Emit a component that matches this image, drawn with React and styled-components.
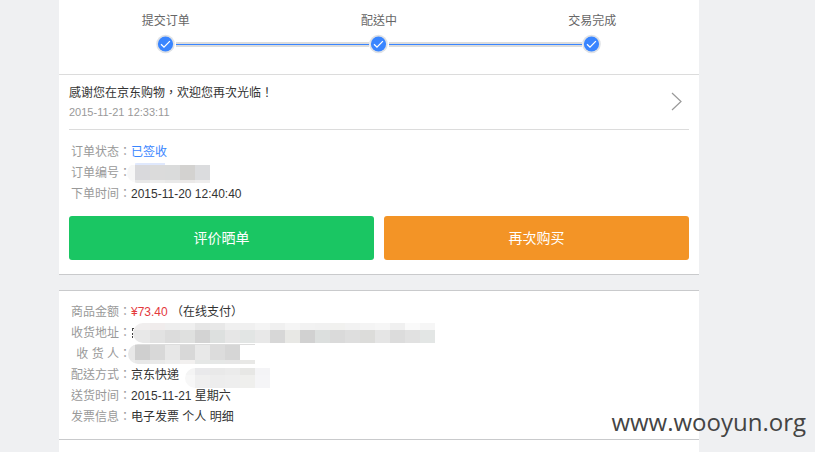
import React from "react";
import styled, { createGlobalStyle } from "styled-components";

const GlobalStyle = createGlobalStyle`
  * { box-sizing: border-box; }
  body {
    margin: 0;
    background: #eff0f2;
    color: #333;
    font: 12px/21px "Liberation Sans", Arial, "Noto Sans CJK TC", sans-serif;
    overflow: hidden;
  }
`;

const Page = styled.main`
  position: relative;
  display: flex;
  flex-direction: column;
  min-height: 100vh;
  padding: 0 116px 0 59px;
`;

const Card = styled.section`
  background: #fff;
  border-bottom: 1px solid #c9cacc;
`;

const PaymentCard = styled(Card)`
  margin-top: 15px;
  border-top: 1px solid #c9cacc;
`;

const GoodsCard = styled.section`
  flex: 1;
  background: #fff;
`;

const Steps = styled.ol`
  display: flex;
  justify-content: space-between;
  margin: 0;
  height: 75px;
  padding: 11px 0 0;
  list-style: none;
  border-bottom: 1px solid #dcdcdc;
`;

const Step = styled.li`
  flex: 1;
  display: flex;
  flex-direction: column;
  align-items: center;
  color: #666;
`;

const StepTrack = styled.div`
  display: grid;
  grid-template-columns: 1fr 20px 1fr;
  align-items: center;
  align-self: stretch;
  margin-top: 2px;
`;

const Rail = styled.span`
  height: 5px;
  border: solid #dcdcdc;
  border-width: 2px 0;
  background: #3985ff;
  visibility: ${(p) => (p.$hidden ? "hidden" : "visible")};
`;

const Latest = styled.a`
  display: flex;
  align-items: center;
  justify-content: space-between;
  margin: 0 10px;
  padding: 8px 6px 9px 0;
  border-bottom: 1px solid #dcdcdc;
  color: #333;
  text-decoration: none;
`;

const Time = styled.time`
  display: block;
  color: #999;
  font-size: 11px;
  line-height: 16px;
`;

const Details = styled.dl`
  margin: 0;
  padding: ${(p) => p.$pad};
`;

const Row = styled.div`
  display: flex;
  height: 21px;
`;

const Label = styled.dt`
  flex: none;
  width: 60px;
  color: #999;
  text-align: right;
  white-space: pre;
`;

const Value = styled.dd`
  display: flex;
  margin: 0;
  white-space: pre;
  color: ${(p) => p.$color || "#333"};
`;

const Price = styled.span`
  color: #e4393c;
`;

const Actions = styled.div`
  display: flex;
  gap: 10px;
  padding: 11px 10px 14px;
`;

const ActionButton = styled.button`
  flex: 1;
  height: 44px;
  border: 0;
  border-radius: 3px;
  background: ${(p) => p.$color};
  color: #fff;
  font: inherit;
  font-size: 14px;
  cursor: pointer;
`;

const MosaicBox = styled.span`
  flex: none;
  display: block;
  overflow: hidden;
  align-self: flex-start;
  margin: ${(p) => p.$margin};
  border-radius: 10px 0 0 10px;
`;

const Band = styled.span`
  display: flex;
  height: ${(p) => p.$height}px;
`;

const Cell = styled.span`
  width: ${(p) => p.$width}px;
  background: ${(p) => p.$color};
`;

const Watermark = styled.div`
  position: absolute;
  right: 9px;
  bottom: 12px;
  color: #444;
  font: 24px/36px "Open Sans", sans-serif;
`;

function CheckDot() {
  return (
    <svg width="20" height="20" viewBox="0 0 20 20" aria-hidden="true">
      <circle cx="9.5" cy="10" r="9.3" fill="#dfe2e6" />
      <circle cx="9.5" cy="10" r="7.6" fill="#3985ff" />
      <path d="M5 10.2l3 2.9 5.9-6" fill="none" stroke="#fff" strokeWidth="1.3" />
    </svg>
  );
}

function Chevron() {
  return (
    <svg width="12" height="20" viewBox="0 0 12 20" aria-hidden="true">
      <path d="M1 1l9 8.5-9 8.5" fill="none" stroke="#999" strokeWidth="1.2" />
    </svg>
  );
}

function StrayInk() {
  return (
    <svg width="3" height="20" viewBox="0 0 3 20" aria-hidden="true">
      <path d="M1 5h2v1h-1v2h-1zM1 10h1v2h-1zM1 13h1v2h-1z" fill="#444" />
    </svg>
  );
}

function Mosaic({ lead, bands, margin }) {
  return (
    <MosaicBox $margin={margin} aria-hidden="true">
      {bands.map(([height, colors], i) => (
        <Band key={i} $height={height}>
          {colors.split(" ").map((c, j) => (
            <Cell key={j} $width={j === 0 ? lead : 15} $color={c} />
          ))}
        </Band>
      ))}
    </MosaicBox>
  );
}

const ORDER_NO = [
  [2, "#fff #dfe8fd #dfe8fd #fff #fff #fff"],
  [15, "#f7f7f7 #d9d9dc #dbdbdb #dadbdb #d3d2d0 #dbdcde"],
  [3, "#fafafa #e8e8e8 #ececec #e9e9e9 #ebe9e8 #eeeded"],
];
const ADDRESS = [
  [7, "#f0eeee #f0ecec #eeeeee #efefef #e6e6e6 #e8e8e8 #f0f0f0 #f0f0f0 #f4f4f4 #f0f0f0 #f5f5f5 #f2f2f2 #f1f1f1 #f1f1ef #f2f2f2 #f4f4f4 #f6f6f6 #f0f0f0 #fafafa #f6f6f6"],
  [13, "#e8e8e8 #e2e2e2 #dcdcdc #dfe0df #d3d3d3 #dde0df #e6e6e6 #e2e5e4 #e8e8e8 #d7d7d7 #e8e8e5 #d1d1d1 #dcdfde #dadada #dedede #dcdcda #e5e5e5 #dcdcdc #e1e1e1 #e3e6e5"],
];
const RECEIVER = [
  [1, "#fff #ddd #ddd #ddd #ddd #ddd #ddd #ddd #ddd"],
  [15, "#e8e8e8 #cfcfcf #d8d8d8 #e7e7e7 #d8d8d8 #e8e8e8 #dcdcdc #d6d6d6 #fff"],
  [4, "#ededed #e8e8e8 #e9e9e9 #ededed #f2f0ef #e5e7e6 #e5e7e6 #e6e6e6 #e8e8e6"],
];
const COURIER = [
  [7, "#f4f4f4 #e9e9eb #e9e9e9 #ebebeb #e7e7e5 #f4f4f6"],
  [13, "#f7f7f7 #efefef #ededed #eeeeee #efefed #f5f5f7"],
];

const STEPS = ["提交订单", "配送中", "交易完成"];

export default function App() {
  return (
    <>
      <GlobalStyle />
      <Page>
        <Card>
          <Steps>
            {STEPS.map((name, i) => (
              <Step key={name}>
                {name}
                <StepTrack>
                  <Rail $hidden={i === 0} />
                  <CheckDot />
                  <Rail $hidden={i === STEPS.length - 1} />
                </StepTrack>
              </Step>
            ))}
          </Steps>
          <Latest href="#logistics">
            <span>
              感谢您在京东购物，欢迎您再次光临！
              <Time>2015-11-21 12:33:11</Time>
            </span>
            <Chevron />
          </Latest>
          <Details $pad="12px 12px 0">
            <Row><Label>订单状态：</Label><Value $color="#3985ff">已签收</Value></Row>
            <Row><Label>订单编号：</Label><Value><Mosaic lead={8} bands={ORDER_NO} margin="0 0 0 -4px" /></Value></Row>
            <Row><Label>下单时间：</Label><Value>2015-11-20 12:40:40</Value></Row>
          </Details>
          <Actions>
            <ActionButton $color="#1ac663">评价晒单</ActionButton>
            <ActionButton $color="#f39426">再次购买</ActionButton>
          </Actions>
        </Card>
        <PaymentCard>
          <Details $pad="11px 12px">
            <Row><Label>商品金额：</Label><Value><Price>¥73.40</Price> （在线支付）</Value></Row>
            <Row><Label>收货地址：</Label><Value><StrayInk /><Mosaic lead={17} bands={ADDRESS} margin="0 0 0 -1px" /></Value></Row>
            <Row><Label>收 货 人：</Label><Value><Mosaic lead={7} bands={RECEIVER} margin="0 0 0 -3px" /></Value></Row>
            <Row><Label>配送方式：</Label><Value>京东快递<Mosaic lead={10} bands={COURIER} margin="3px 0 0 6px" /></Value></Row>
            <Row><Label>送货时间：</Label><Value>2015-11-21 星期六</Value></Row>
            <Row><Label>发票信息：</Label><Value>电子发票 个人 明细</Value></Row>
          </Details>
        </PaymentCard>
        <GoodsCard />
        <Watermark>www.wooyun.org</Watermark>
      </Page>
    </>
  );
}
